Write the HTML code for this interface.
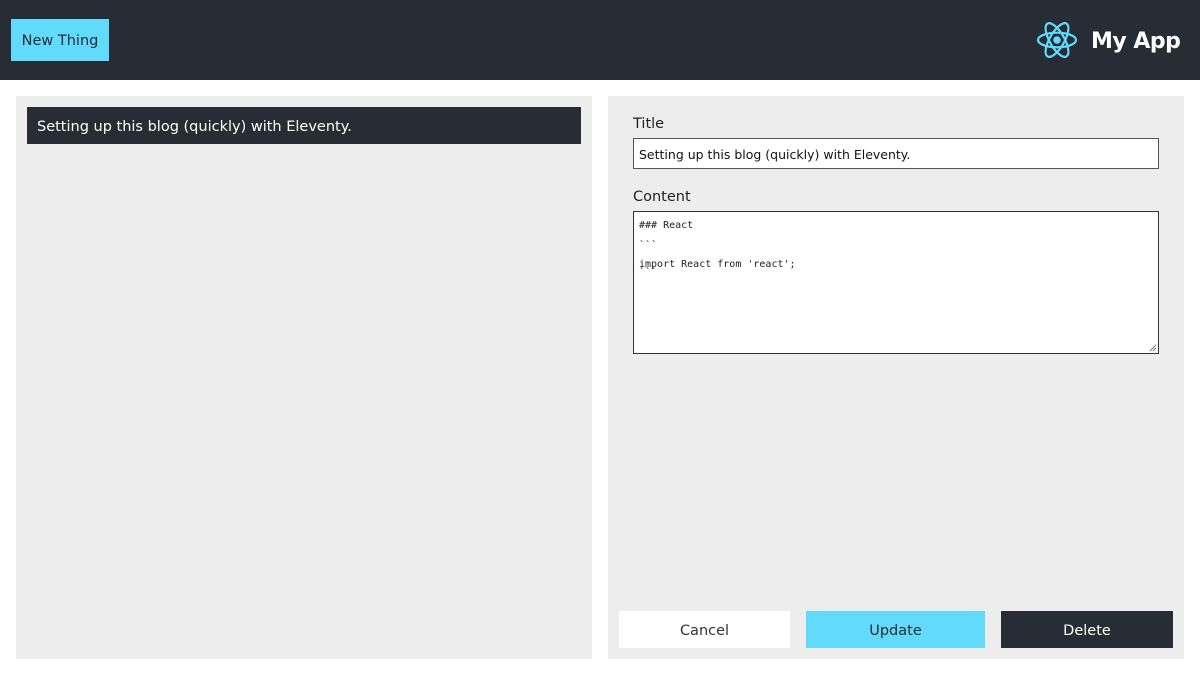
<!DOCTYPE html>
<html><head><style>
*{margin:0;padding:0;box-sizing:border-box}
body{width:1200px;height:675px;background:#fff;font-family:"DejaVu Sans","Liberation Sans",sans-serif;position:relative;overflow:hidden}
.a{position:absolute}
.m{position:absolute;font-family:"DejaVu Sans Mono",monospace;font-size:10px;color:#222;left:639px;line-height:14px}
</style></head><body>
<div class="a" style="left:0;top:0;width:1200px;height:80px;background:#282c34"></div>
<div class="a" style="left:11px;top:19px;width:98px;height:42px;background:#61dafb;color:#282c34;font-size:14.5px;line-height:44px;text-align:center">New Thing</div>
<svg class="a" style="left:1036px;top:20px" width="42" height="40" viewBox="-21 -20 42 40">
<g fill="none" stroke="#61dafb" stroke-width="2.2">
<ellipse rx="19" ry="7.3"/><ellipse rx="19" ry="7.3" transform="rotate(60)"/><ellipse rx="19" ry="7.3" transform="rotate(120)"/></g>
<circle r="3.8" fill="#61dafb"/></svg>
<div class="a" style="left:1091px;top:26px;color:#fff;font-size:22px;font-weight:bold;line-height:32px;letter-spacing:-0.5px">My App</div>
<div class="a" style="left:16px;top:96px;width:576px;height:563px;background:#ededed"></div>
<div class="a" style="left:27px;top:107px;width:554px;height:37px;background:#282c34;color:#fff;font-size:14.5px;line-height:40px;padding-left:10px">Setting up this blog (quickly) with Eleventy.</div>
<div class="a" style="left:608px;top:96px;width:576px;height:563px;background:#ededed"></div>
<div class="a" style="left:633px;top:114px;font-size:14.5px;color:#222;line-height:20px">Title</div>
<div class="a" style="left:633px;top:138px;width:526px;height:31px;background:#fff;border:1px solid #555;font-size:12.5px;line-height:31px;padding-left:5px;color:#111">Setting up this blog (quickly) with Eleventy.</div>
<div class="a" style="left:633px;top:187px;font-size:14.5px;color:#222;line-height:20px">Content</div>
<div class="a" style="left:633px;top:211px;width:526px;height:143px;background:#fff;border:1px solid #333"></div>
<div class="m" style="top:219px">### React</div>
<div class="m" style="top:239px">&#96;&#96;&#96;</div>
<div class="m" style="top:258px">import React from 'react';</div>
<div class="m" style="top:266px">&#96;&#96;&#96;</div>
<svg class="a" style="left:1149px;top:344px" width="8" height="8"><path d="M1 7L7 1M4 7L7 4" stroke="#777" stroke-width="1"/></svg>
<div class="a" style="left:619px;top:611px;width:171px;height:37px;background:#fff;color:#333;font-size:14.5px;line-height:40px;text-align:center">Cancel</div>
<div class="a" style="left:806px;top:611px;width:179px;height:37px;background:#61dafb;color:#282c34;font-size:14.5px;line-height:40px;text-align:center">Update</div>
<div class="a" style="left:1001px;top:611px;width:172px;height:37px;background:#282c34;color:#fff;font-size:14.5px;line-height:40px;text-align:center">Delete</div>
</body></html>
